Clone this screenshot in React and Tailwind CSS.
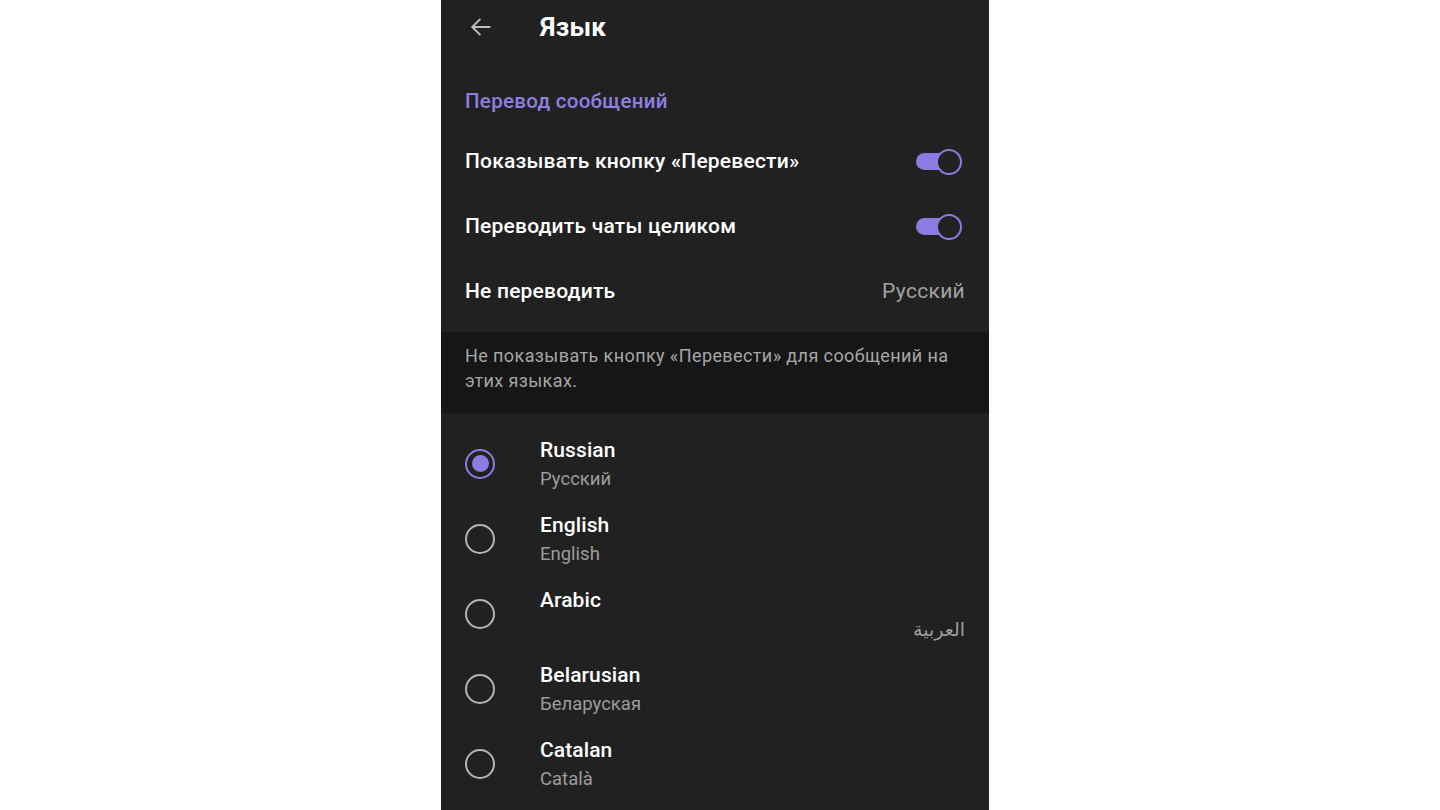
import React from "react";

const languages = [
  { name: "Russian", native: "Русский", selected: true },
  { name: "English", native: "English" },
  { name: "Arabic", native: "العربية", rtl: true },
  { name: "Belarusian", native: "Беларуская" },
  { name: "Catalan", native: "Català" },
];

function Toggle() {
  return (
    <div className="relative w-[46px] h-[26px] flex items-center">
      <div className="w-[38px] h-[17px] rounded-full bg-[#8c7be3]" />
      <div className="absolute right-0 top-0 w-[26px] h-[26px] rounded-full border-[2.5px] border-[#8c7be3] bg-[#212121]" />
    </div>
  );
}

function Radio({ checked }) {
  return checked ? (
    <div className="w-[30px] h-[30px] rounded-full border-[2.5px] border-[#8c7be3] flex items-center justify-center">
      <div className="w-[17px] h-[17px] rounded-full bg-[#8c7be3]" />
    </div>
  ) : (
    <div className="w-[30px] h-[30px] rounded-full border-[2.5px] border-[#b5b5b5]" />
  );
}

export default function App() {
  return (
    <div className="w-[1440px] h-[810px] bg-white flex pl-[441px] overflow-hidden font-['Roboto',sans-serif]">
      <div className="w-[548px] h-full bg-[#212121] flex flex-col">
        {/* Top bar */}
        <div className="h-[54px] flex items-center px-[27px] shrink-0">
          <svg width="26" height="26" viewBox="0 0 24 24" fill="none" stroke="#bdbdbd" strokeWidth="1.8" strokeLinecap="round" strokeLinejoin="round">
            <path d="M20 12H4" />
            <path d="M11 5l-7 7 7 7" />
          </svg>
          <span className="ml-[46px] text-[26px] font-bold text-white tracking-[0.3px]">Язык</span>
        </div>

        {/* Section header */}
        <div className="h-[34px] mt-[30px] flex items-center px-[24px] text-[20.5px] font-medium text-[#8f7fe0] tracking-[0.3px]">
          Перевод сообщений
        </div>

        <div className="h-[65px] mt-[11px] flex items-center justify-between pl-[24px] pr-[27px]">
          <span className="text-[21px] font-medium text-white tracking-[0.2px]">Показывать кнопку «Перевести»</span>
          <Toggle />
        </div>
        <div className="h-[65px] flex items-center justify-between pl-[24px] pr-[27px]">
          <span className="text-[21px] font-medium text-white tracking-[0.2px]">Переводить чаты целиком</span>
          <Toggle />
        </div>
        <div className="h-[65px] flex items-center justify-between pl-[24px] pr-[24px]">
          <span className="text-[21px] font-medium text-white tracking-[0.2px]">Не переводить</span>
          <span className="text-[21px] text-[#a3a3a3] tracking-[0.3px]">Русский</span>
        </div>

        {/* Info box */}
        <div className="mt-[8px] h-[81px] bg-[#161616] pl-[24px] pr-[30px] pt-[11px] text-[18px] leading-[25px] text-[#a6a6a6] tracking-[0.4px]">
          Не показывать кнопку «Перевести» для сообщений на этих языках.
        </div>

        {/* Language list */}
        <div className="pt-[13px] flex flex-col">
          {languages.map((l) => (
            <div key={l.name} className="h-[75px] flex items-center pl-[24px] pr-[24px]">
              <Radio checked={l.selected} />
              <div className="ml-[45px] flex-1 flex flex-col self-stretch pt-[10px]">
                <span className="text-[21px] font-medium text-white leading-[28px] tracking-[0.1px]">{l.name}</span>
                {l.rtl ? (
                  <span dir="rtl" className="text-right text-[19px] font-medium text-[#9c9c9c] leading-[30px] font-['Noto_Sans','DejaVu_Sans',sans-serif]">
                    {l.native}
                  </span>
                ) : (
                  <span className="text-[18.5px] text-[#9c9c9c] leading-[30px]">{l.native}</span>
                )}
              </div>
            </div>
          ))}
        </div>
      </div>
    </div>
  );
}
